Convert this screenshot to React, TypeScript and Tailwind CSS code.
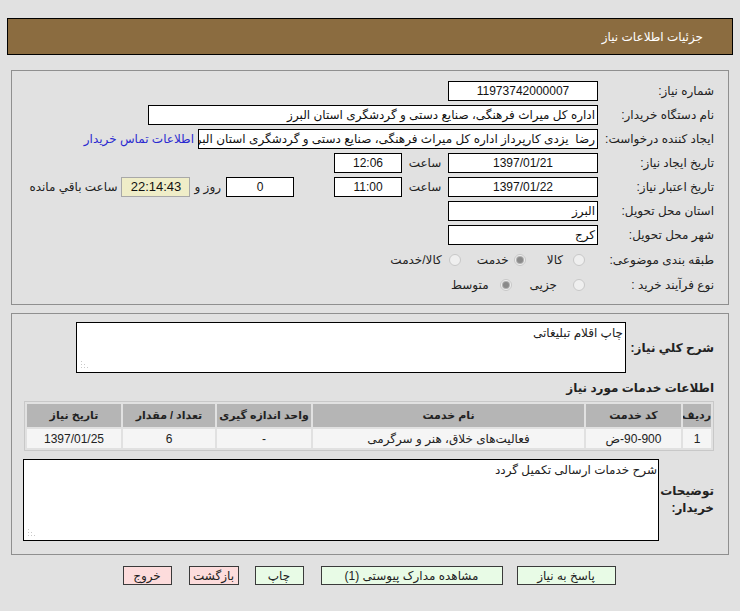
import React from "react";

const Box = ({ w, children, center = false, className = "" }: { w: string; children?: React.ReactNode; center?: boolean; className?: string }) => (
  <div className={`${w} h-[20px] shrink-0 border border-black bg-white flex items-center px-[2px] text-[12px] text-[#111] whitespace-nowrap overflow-hidden ${center ? "justify-center" : "justify-start"} ${className}`}>
    {children}
  </div>
);

const Radio = ({ checked = false, className = "" }: { checked?: boolean; className?: string }) => (
  <span className={`w-[12px] h-[12px] shrink-0 rounded-full border border-[#c8c8c8] bg-[#efefef] flex items-center justify-center ${className}`}>
    {checked && <span className="w-[6px] h-[6px] rounded-full bg-[#8a8a8a] ring-1 ring-[#b0b0b0]" />}
  </span>
);

const Grip = () => (
  <svg className="absolute left-[3px] bottom-[3px]" width="8" height="8" viewBox="0 0 8 8">
    <rect x="1" y="6" width="1" height="1" fill="#c8c8c8" />
    <rect x="4" y="6" width="1" height="1" fill="#c8c8c8" />
    <rect x="7" y="6" width="1" height="1" fill="#c8c8c8" />
    <rect x="1" y="3" width="1" height="1" fill="#c8c8c8" />
    <rect x="4" y="3" width="1" height="1" fill="#c8c8c8" />
    <rect x="1" y="0" width="1" height="1" fill="#c8c8c8" />
  </svg>
);

const Row = ({ label, children, h = "h-[24px]" }: { label: string; children?: React.ReactNode; h?: string }) => (
  <div className={`flex items-center ${h}`}>
    <div className="w-[116px] shrink-0 text-[12px] text-[#222] whitespace-nowrap">{label}</div>
    {children}
  </div>
);

const Btn = ({ children, color, w, className = "" }: { children: React.ReactNode; color: string; w: string; className?: string }) => (
  <div className={`${w} h-[19px] border border-[#3a3a3a] ${color} flex items-center justify-center text-[12px] text-[#222] whitespace-nowrap ${className}`}>
    {children}
  </div>
);

export default function App() {
  return (
    <div dir="rtl" className="w-[740px] h-[611px] bg-[#e1e1e1] overflow-hidden font-['Liberation_Sans','DejaVu_Sans',sans-serif] pt-[18px]">
      <div className="mx-[7px] h-[37px] bg-[#8b6c40] border border-black flex items-center pr-[29px] text-white text-[12px]">
        جزئیات اطلاعات نیاز
      </div>

      <div className="mx-[11px] mt-[15px] h-[235px] border border-[#8f8f8f] pt-[8px] pr-[14px]">
        <Row label="شماره نیاز:">
          <Box w="w-[150px]" center>11973742000007</Box>
        </Row>
        <Row label="نام دستگاه خریدار:">
          <Box w="w-[450px]">اداره کل میراث فرهنگی، صنایع دستی و گردشگری استان البرز</Box>
        </Row>
        <Row label="ایجاد کننده درخواست:">
          <Box w="w-[400px]">رضا&nbsp; یزدی کارپرداز اداره کل میراث فرهنگی، صنایع دستی و گردشگری استان البرز</Box>
          <span className="mr-[4px] text-[12px] text-[#2a2ad0] whitespace-nowrap">اطلاعات تماس خریدار</span>
        </Row>
        <Row label="تاریخ ایجاد نیاز:">
          <Box w="w-[150px]" center>1397/01/21</Box>
          <span className="w-[46px] text-center text-[12px] text-[#222]">ساعت</span>
          <Box w="w-[68px]" center>12:06</Box>
        </Row>
        <Row label="تاریخ اعتبار نیاز:">
          <Box w="w-[150px]" center>1397/01/22</Box>
          <span className="w-[46px] text-center text-[12px] text-[#222]">ساعت</span>
          <Box w="w-[68px]" center>11:00</Box>
          <Box w="w-[68px]" center className="mr-[40px]">0</Box>
          <span className="mr-[5px] text-[12px] text-[#222] whitespace-nowrap">روز و</span>
          <div className="mr-[4px] w-[69px] h-[20px] border border-[#a8a8a8] bg-[#efedc8] flex items-center justify-center text-[13px] text-[#111]">22:14:43</div>
          <span className="mr-[4px] text-[12px] text-[#222] whitespace-nowrap">ساعت باقي مانده</span>
        </Row>
        <Row label="استان محل تحویل:">
          <Box w="w-[150px]">البرز</Box>
        </Row>
        <Row label="شهر محل تحویل:">
          <Box w="w-[150px]">کرج</Box>
        </Row>
        <Row label="طبقه بندی موضوعی:" h="h-[26px]">
          <Radio className="mr-[13px]" />
          <span className="mr-[10px] text-[12px] text-[#222]">کالا</span>
          <Radio className="mr-[21px]" checked />
          <span className="mr-[5px] text-[12px] text-[#222]">خدمت</span>
          <Radio className="mr-[16px]" />
          <span className="mr-[7px] text-[12px] text-[#222]">کالا/خدمت</span>
        </Row>
        <Row label="نوع فرآیند خرید :">
          <Radio className="mr-[13px]" />
          <span className="mr-[16px] text-[12px] text-[#222]">جزیی</span>
          <Radio className="mr-[18px]" checked />
          <span className="mr-[11px] text-[12px] text-[#222]">متوسط</span>
        </Row>
      </div>

      <div className="mx-[11px] mt-[8px] h-[242px] border border-[#8f8f8f] pt-[8px] pr-[14px]">
        <div className="flex items-center">
          <div className="w-[88px] shrink-0 text-[12px] font-bold text-[#222] whitespace-nowrap">شرح کلي نیاز:</div>
          <div className="relative w-[550px] h-[51px] border border-black bg-white px-[2px] pt-[1px] text-[12px] text-[#222]">
            چاپ اقلام تبلیغاتی
            <Grip />
          </div>
        </div>
        <div className="mt-[6px] h-[18px] flex items-center text-[12px] font-bold text-[#222]">اطلاعات خدمات مورد نیاز</div>
        <div className="mt-[4px] w-[690px] border border-[#c8c8c8]">
          <table className="w-full table-fixed border-separate border-spacing-[2px] text-[12px] text-[#222]">
            <colgroup>
              <col className="w-[28px]" />
              <col className="w-[95px]" />
              <col className="w-[271px]" />
              <col className="w-[94px]" />
              <col className="w-[92px]" />
              <col />
            </colgroup>
            <thead>
              <tr className="h-[23px] bg-[#b5b5b5] text-[11px]">
                <th className="font-bold whitespace-nowrap overflow-hidden">ردیف</th>
                <th className="font-bold whitespace-nowrap">کد خدمت</th>
                <th className="font-bold whitespace-nowrap">نام خدمت</th>
                <th className="font-bold whitespace-nowrap">واحد اندازه گیری</th>
                <th className="font-bold whitespace-nowrap">تعداد / مقدار</th>
                <th className="font-bold whitespace-nowrap">تاریخ نیاز</th>
              </tr>
            </thead>
            <tbody>
              <tr className="h-[19px] bg-[#f5f5f5] text-center">
                <td>1</td>
                <td><bdo dir="ltr">ض-90-900</bdo></td>
                <td className="whitespace-nowrap">فعالیت‌های خلاق، هنر و سرگرمی</td>
                <td>-</td>
                <td>6</td>
                <td>1397/01/25</td>
              </tr>
            </tbody>
          </table>
        </div>
        <div className="mt-[8px] flex items-center">
          <div className="w-[55px] shrink-0 text-[12px] font-bold text-[#222] leading-[17px] whitespace-nowrap">
            توضیحات<br />خریدار:
          </div>
          <div className="relative w-[636px] h-[82px] border border-black bg-white px-[1px] pt-[1px] text-[12px] text-[#222]">
            شرح خدمات ارسالی تکمیل گردد
            <Grip />
          </div>
        </div>
      </div>

      <div className="mt-[11px] flex justify-center pr-[2px]">
        <Btn color="bg-[#e8fbe6]" w="w-[99px]">پاسخ به نیاز</Btn>
        <Btn color="bg-[#e8fbe6]" w="w-[182px]" className="mr-[14px]">مشاهده مدارک پیوستی (1)</Btn>
        <Btn color="bg-[#e8fbe6]" w="w-[49px]" className="mr-[17px]">چاپ</Btn>
        <Btn color="bg-[#fddcdc]" w="w-[50px]" className="mr-[16px]">بازگشت</Btn>
        <Btn color="bg-[#fddcdc]" w="w-[49px]" className="mr-[17px]">خروج</Btn>
      </div>
    </div>
  );
}
